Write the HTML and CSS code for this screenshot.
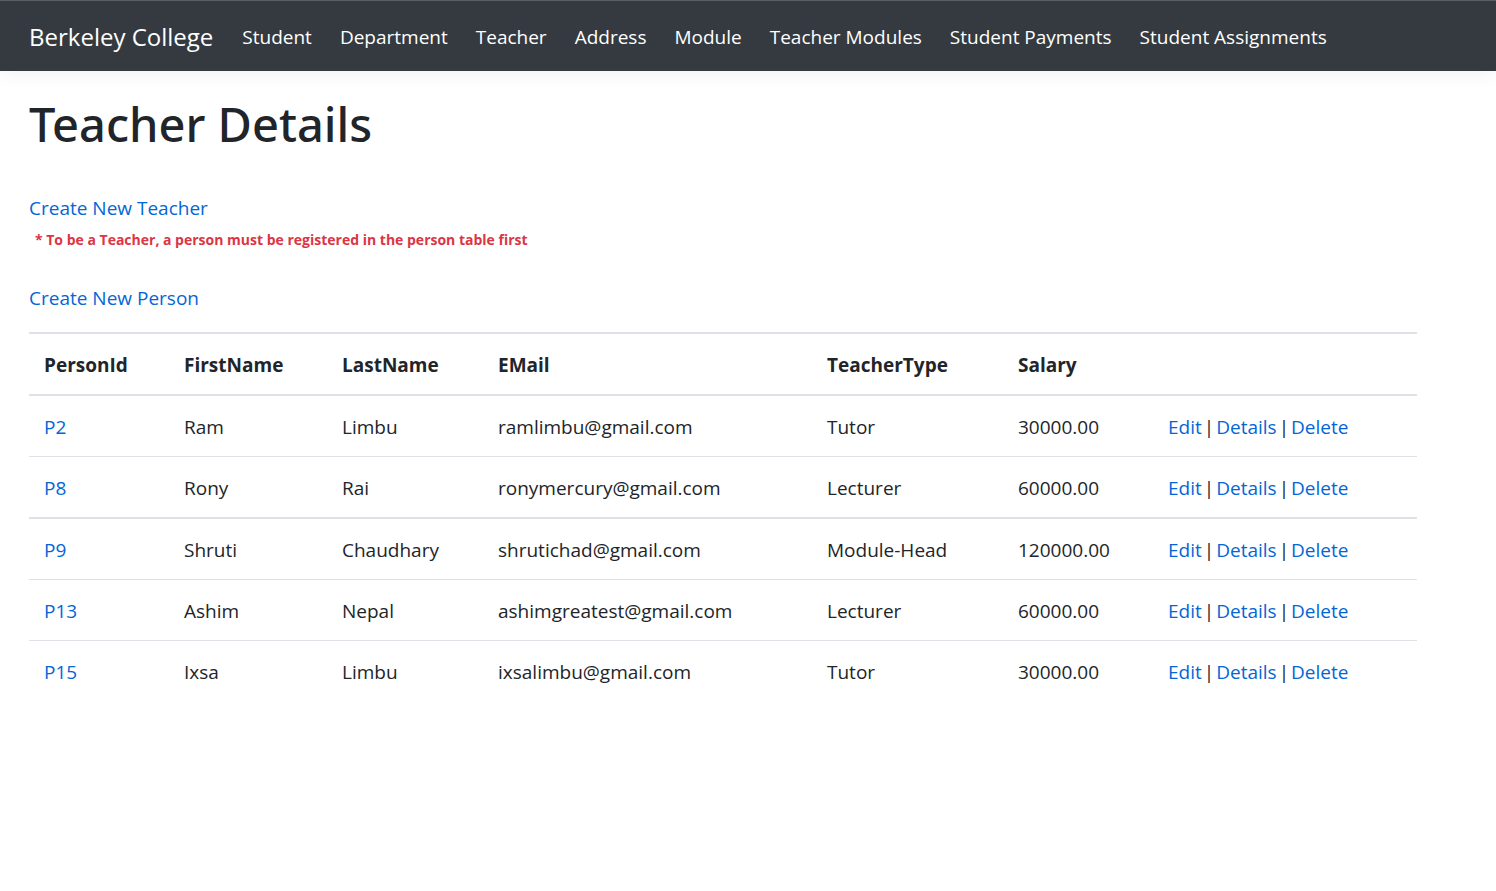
FILE: index.html
```html
<!DOCTYPE html>
<html lang="en">
<head>
<meta charset="utf-8">
<title>Teacher Details</title>
<link rel="stylesheet" href="styles.css">
</head>
<body>
<header class="navbar">
  <a class="brand" href="#">Berkeley College</a>
  <nav class="nav">
    <a class="nav-link" href="#">Student</a>
    <a class="nav-link" href="#">Department</a>
    <a class="nav-link" href="#">Teacher</a>
    <a class="nav-link" href="#">Address</a>
    <a class="nav-link" href="#">Module</a>
    <a class="nav-link" href="#">Teacher Modules</a>
    <a class="nav-link" href="#">Student Payments</a>
    <a class="nav-link" href="#">Student Assignments</a>
  </nav>
</header>
<main class="content">
  <h1 class="title">Teacher Details</h1>
  <p class="create"><a href="#">Create New Teacher</a></p>
  <p class="note">* To be a Teacher, a person must be registered in the person table first</p>
  <p class="create"><a href="#">Create New Person</a></p>
  <table class="table">
    <colgroup>
      <col class="col-id"><col class="col-first"><col class="col-last"><col class="col-email"><col class="col-type"><col class="col-salary"><col class="col-actions">
    </colgroup>
    <thead>
      <tr><th>PersonId</th><th>FirstName</th><th>LastName</th><th>EMail</th><th>TeacherType</th><th>Salary</th><th></th></tr>
    </thead>
    <tbody>
      <tr><td><a href="#">P2</a></td><td>Ram</td><td>Limbu</td><td>ramlimbu@gmail.com</td><td>Tutor</td><td>30000.00</td><td><div class="actions"><a href="#">Edit</a><span>|</span><a href="#">Details</a><span>|</span><a href="#">Delete</a></div></td></tr>
      <tr><td><a href="#">P8</a></td><td>Rony</td><td>Rai</td><td>ronymercury@gmail.com</td><td>Lecturer</td><td>60000.00</td><td><div class="actions"><a href="#">Edit</a><span>|</span><a href="#">Details</a><span>|</span><a href="#">Delete</a></div></td></tr>
      <tr class="row-strong"><td><a href="#">P9</a></td><td>Shruti</td><td>Chaudhary</td><td>shrutichad@gmail.com</td><td>Module-Head</td><td>120000.00</td><td><div class="actions"><a href="#">Edit</a><span>|</span><a href="#">Details</a><span>|</span><a href="#">Delete</a></div></td></tr>
      <tr><td><a href="#">P13</a></td><td>Ashim</td><td>Nepal</td><td>ashimgreatest@gmail.com</td><td>Lecturer</td><td>60000.00</td><td><div class="actions"><a href="#">Edit</a><span>|</span><a href="#">Details</a><span>|</span><a href="#">Delete</a></div></td></tr>
      <tr><td><a href="#">P15</a></td><td>Ixsa</td><td>Limbu</td><td>ixsalimbu@gmail.com</td><td>Tutor</td><td>30000.00</td><td><div class="actions"><a href="#">Edit</a><span>|</span><a href="#">Details</a><span>|</span><a href="#">Delete</a></div></td></tr>
    </tbody>
  </table>
</main>
</body>
</html>
```
FILE: styles.css
```css
* { box-sizing: border-box; }
body {
  margin: 0;
  background: #fff;
  color: #212529;
  font-family: "Segoe UI", "Open Sans", "Noto Sans", sans-serif;
  font-size: 19px;
  line-height: 30px;
}
a { color: #0366d6; text-decoration: none; }
.navbar {
  display: flex;
  align-items: center;
  gap: 29px;
  padding: 16px 29px 15px;
  border-top: 1px solid #5c5e61;
  background: #343a40;
  box-shadow: 0 5px 15px rgba(0, 0, 0, 0.05);
}
.navbar a { color: #fff; white-space: nowrap; }
.navbar .brand { font-size: 24px; line-height: 39px; }
.nav { display: flex; gap: 28px; }
.content { padding: 23px 79px 24px 29px; }
.title {
  margin: 0 0 39px;
  font-family: "Segoe UI", "Noto Sans", sans-serif;
  font-size: 47px;
  line-height: 60px;
  font-weight: 500;
}
.create { margin: 0; }
.note { margin: 0 0 28px; padding: 2px 0 0 6px; color: #dc3545; font-size: 14px; font-weight: 700; }
.table { width: 100%; margin-top: 19px; border-collapse: separate; border-spacing: 0; table-layout: fixed; }
.table th, .table td { padding: 16px 15px 14px; text-align: left; border-top: 1px solid #dee2e6; white-space: nowrap; }
.table th { border-top-width: 2px; border-bottom: 2px solid #dee2e6; font-weight: 700; }
.table tbody tr:first-child td { border-top: 0; }
.table .row-strong td { border-top-width: 2px; }
.actions { display: flex; gap: 2px; }
.col-id { width: 140px; }
.col-first { width: 158px; }
.col-last { width: 156px; }
.col-email { width: 329px; }
.col-type { width: 191px; }
.col-salary { width: 150px; }
```
